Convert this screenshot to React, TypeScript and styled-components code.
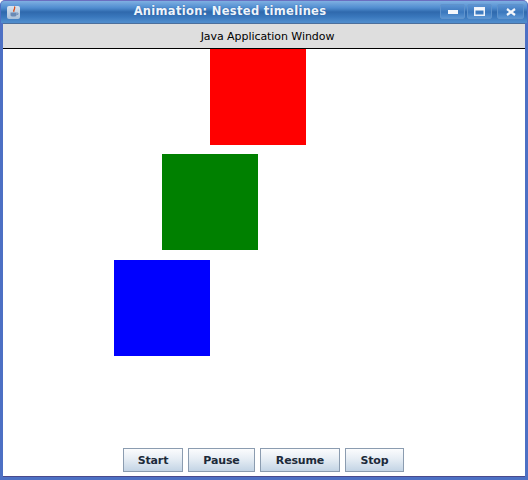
import React from "react";
import styled, { createGlobalStyle } from "styled-components";

const GlobalStyle = createGlobalStyle`
  html, body {
    margin: 0;
    padding: 0;
    background: #fff;
  }
  * {
    box-sizing: border-box;
  }
`;

const Frame = styled.div`
  width: 528px;
  height: 480px;
  display: flex;
  flex-direction: column;
  background: #4d70c4;
  border: 1px solid #4d70c4;
  border-top-color: #6a6fc0;
  border-radius: 5px 5px 0 0;
  overflow: hidden;
  font-family: "DejaVu Sans", sans-serif;
`;

const TitleBar = styled.div`
  height: 22px;
  flex: none;
  display: flex;
  align-items: center;
  padding: 0 3px 0 6px;
  background: linear-gradient(
    to bottom,
    #7fb0e2 0,
    #6aa0da 3px,
    #4f8ccf 7px,
    #2f69ad 11px,
    #3a78bd 16px,
    #4f8ccc 21px
  );
`;

const AppIcon = styled.div`
  width: 13px;
  height: 13px;
  display: flex;
  align-items: center;
  justify-content: center;
  border-radius: 2px;
  background: linear-gradient(to bottom, #d8e2ee, #a9c0da);
`;

const Title = styled.div`
  flex: 1;
  text-align: center;
  padding-bottom: 2px;
  color: #eef4fb;
  font-size: 11.5px;
  font-weight: bold;
  letter-spacing: 0.3px;
  text-shadow: 0 0 1px #2b5c9c;
`;

const WindowButtons = styled.div`
  display: flex;
  align-items: center;
  padding-bottom: 1px;
`;

const WindowButton = styled.div<{ $wide?: boolean; $gap?: number }>`
  width: ${(p) => (p.$wide ? 27 : 25)}px;
  height: 15px;
  margin-left: ${(p) => p.$gap ?? 0}px;
  display: flex;
  align-items: center;
  justify-content: center;
  border: 1px solid #5f93cc;
  border-radius: 2px;
  background: linear-gradient(to bottom, #5b93d2, #3b78bd 55%, #5a95d3);
`;

const Body = styled.div`
  flex: 1;
  display: flex;
  flex-direction: column;
  margin: 0 2px 2px;
  background: #fff;
  border-top: 1px solid #4c6f9c;
  border-bottom: 1px solid #4a4a8c;
`;

const Header = styled.div`
  height: 25px;
  flex: none;
  display: flex;
  align-items: center;
  justify-content: center;
  padding-left: 7px;
  background: #dedede;
  border-bottom: 1px solid #000;
  color: #000;
  font-size: 11px;
  letter-spacing: -0.06px;
`;

const Canvas = styled.div`
  position: relative;
  flex: 1;
  background: #fff;
`;

const Square = styled.div<{ $x: number; $y: number; $color: string }>`
  position: absolute;
  left: ${(p) => p.$x}px;
  top: ${(p) => p.$y}px;
  width: 96px;
  height: 96px;
  background: ${(p) => p.$color};
`;

const Controls = styled.div`
  position: absolute;
  left: 0;
  right: 0;
  bottom: 4px;
  display: flex;
  justify-content: center;
  gap: 5px;
  padding-right: 2px;
`;

const Button = styled.button<{ $width: number }>`
  width: ${(p) => p.$width}px;
  height: 24px;
  padding: 0 0 0 1px;
  border: 1px solid #8b9cb0;
  background: linear-gradient(to bottom, #fbfcfd 0%, #e6edf4 45%, #c3d4e5 100%);
  color: #1c2a3a;
  font-family: "DejaVu Sans", sans-serif;
  font-size: 11px;
  font-weight: bold;
  letter-spacing: -0.15px;
`;

const squares = [
  { x: 207, y: 0, color: "#ff0000" },
  { x: 159, y: 105, color: "#008000" },
  { x: 111, y: 211, color: "#0000ff" },
];

const buttons = [
  { label: "Start", width: 60 },
  { label: "Pause", width: 67 },
  { label: "Resume", width: 80 },
  { label: "Stop", width: 59 },
];

const App = () => {
  return (
    <Frame>
      <GlobalStyle />
      <TitleBar>
        <AppIcon>
          <svg width="10" height="12" viewBox="0 0 10 12">
            <path d="M5.5 0.5 C7 2.5 3.5 3.5 5 6 C4 4.5 6.5 3.5 5.5 0.5Z" fill="#d8501c" stroke="#d8501c" strokeWidth="1.2" />
            <path d="M1.5 6.5 H7.5 V9 C7.5 10 6.5 10.5 4.5 10.5 C2.5 10.5 1.5 10 1.5 9Z" fill="#6a8ab5" />
            <path d="M7.5 7 H9 V8.5 H7.5" fill="none" stroke="#6a8ab5" strokeWidth="0.8" />
          </svg>
        </AppIcon>
        <Title>Animation: Nested timelines</Title>
        <WindowButtons>
          <WindowButton>
            <svg width="10" height="4" viewBox="0 0 10 4">
              <rect width="10" height="4" fill="#f4f7fb" />
            </svg>
          </WindowButton>
          <WindowButton $gap={2}>
            <svg width="11" height="9" viewBox="0 0 11 9">
              <rect x="0.75" y="0.75" width="9.5" height="7.5" fill="none" stroke="#eef3fa" strokeWidth="1.5" />
              <rect x="1" y="1" width="9" height="2.5" fill="#f4f7fb" />
            </svg>
          </WindowButton>
          <WindowButton $wide $gap={5}>
            <svg width="10" height="8" viewBox="0 0 10 8">
              <path d="M1 1 L9 7 M9 1 L1 7" stroke="#f4f7fb" strokeWidth="2.2" />
            </svg>
          </WindowButton>
        </WindowButtons>
      </TitleBar>
      <Body>
        <Header>Java Application Window</Header>
        <Canvas>
          {squares.map((s) => (
            <Square key={s.color} $x={s.x} $y={s.y} $color={s.color} />
          ))}
          <Controls>
            {buttons.map((b) => (
              <Button key={b.label} $width={b.width}>
                {b.label}
              </Button>
            ))}
          </Controls>
        </Canvas>
      </Body>
    </Frame>
  );
};

export default App;
